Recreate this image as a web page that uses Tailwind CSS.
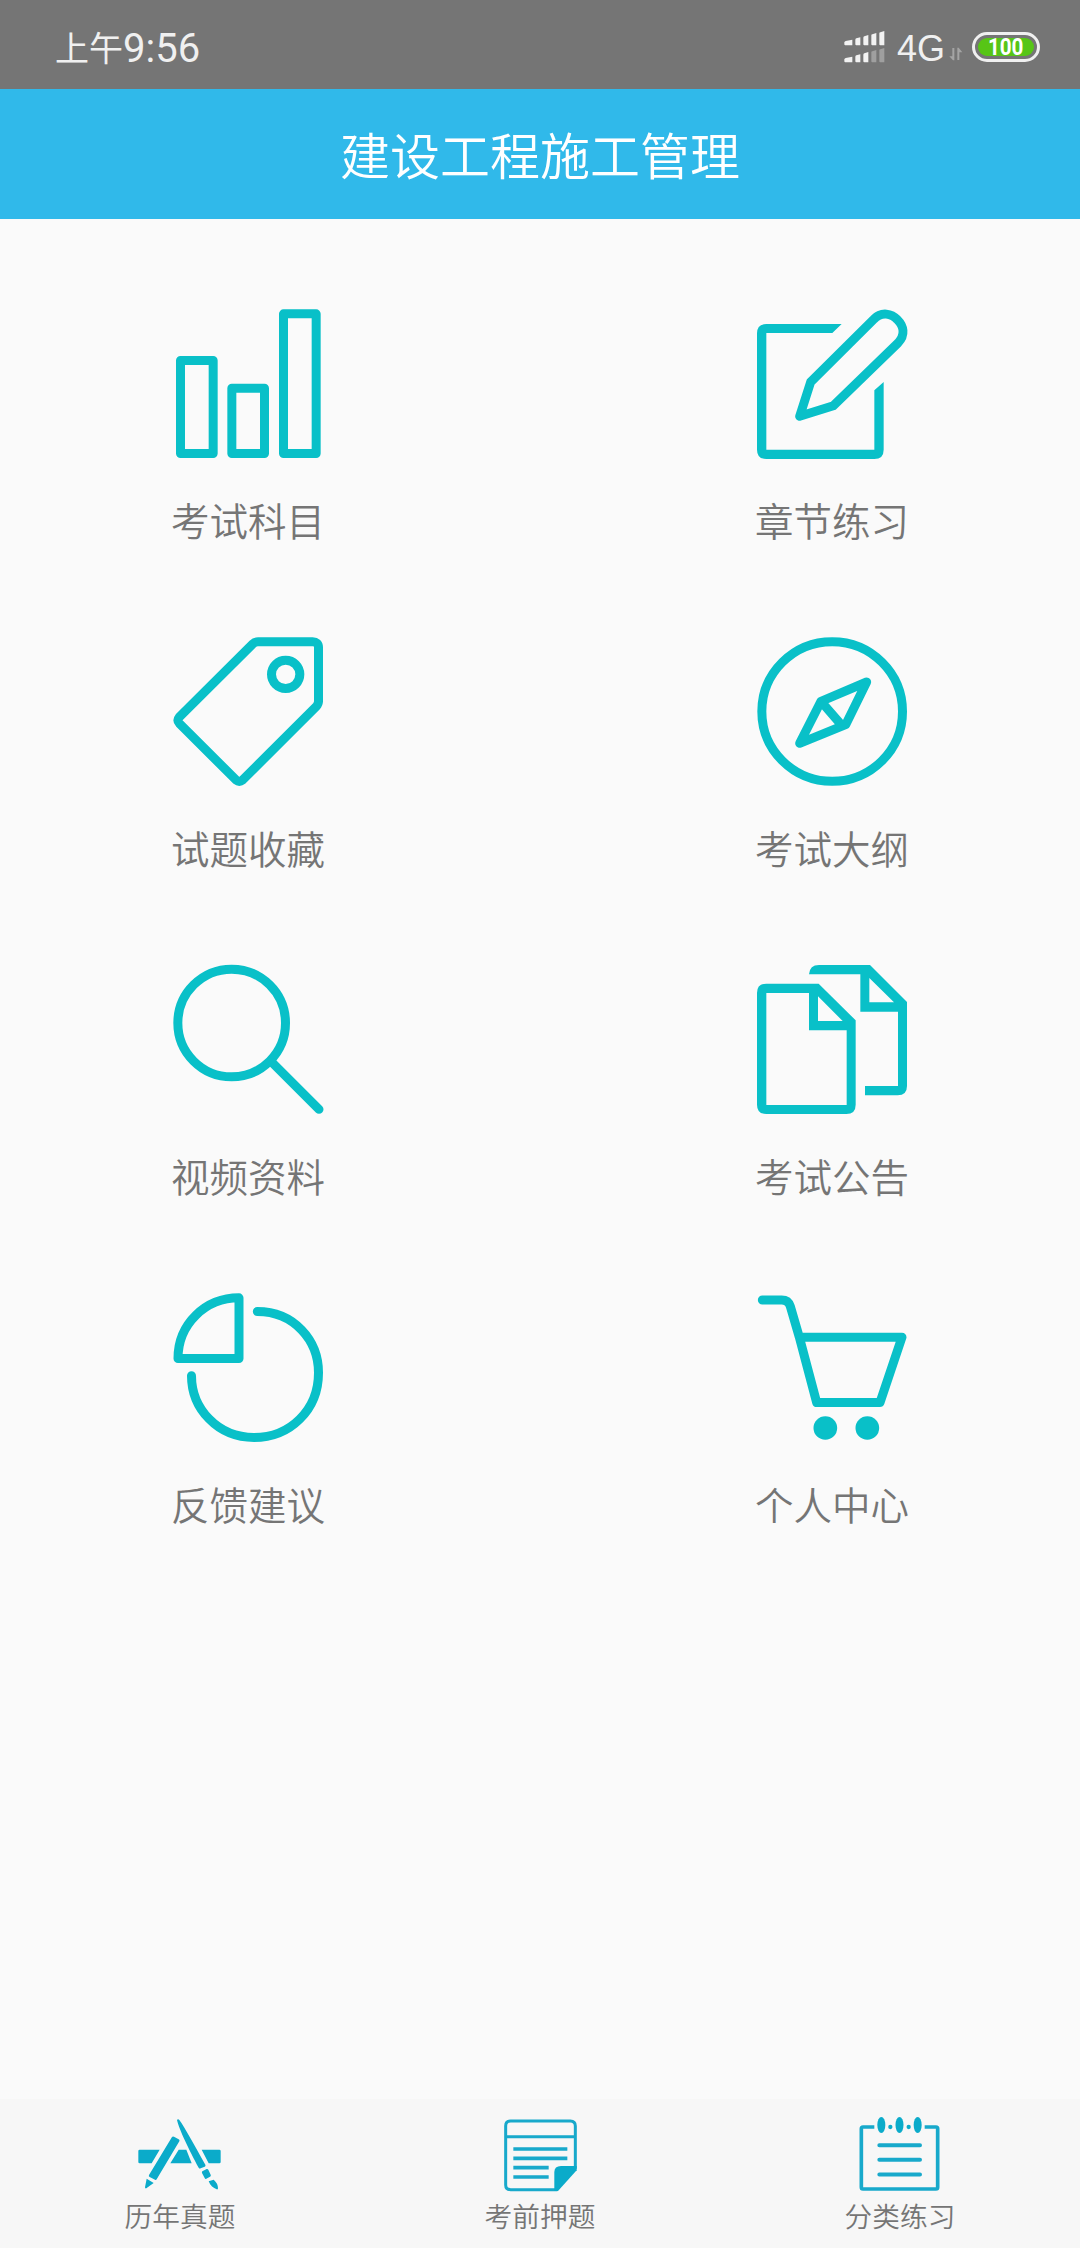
<!DOCTYPE html>
<html lang="zh-CN">
<head>
  <meta charset="UTF-8">
  <meta name="viewport" content="width=device-width, initial-scale=1.0">
  <title>建设工程施工管理</title>
  <script src="https://cdn.jsdelivr.net/npm/@tailwindcss/browser@4"></script>
</head>
<body class="bg-[#fafafa] h-[2248px] flex flex-col overflow-hidden font-['Noto_Sans_CJK_SC',sans-serif] font-[350] text-[#757575]">

  <!-- Status bar -->
  <div class="h-[89px] shrink-0 bg-[#757575] flex items-center justify-between pl-[55px] pr-[39px] pt-[5px] text-[#f0f0f0]">
    <div class="flex items-center leading-none font-normal">
      <span class="text-[34px]">上午</span>
      <span class="text-[40px] font-['Roboto',sans-serif] w-[78px] mt-[3px] whitespace-nowrap">9:56</span>
    </div>
    <div class="flex items-center">
      <svg class="w-[42px] h-[34px] mt-[2px]" viewBox="74 95 126 102" fill="#f2f2f2">
        <path d="M75 128l4-3 20-4v17H78q-3 0-3-3zM108 121q0-3 3-4l12-3v24h-12q-3 0-3-3zM132 115q0-3 3-4l12-4v31h-12q-3 0-3-3zM156 108q0-3 3-3l12-4v37h-12q-3 0-3-3zM180 102q0-3 3-3l12-4v43h-12q-3 0-3-3z"/>
        <path d="M75 179l4-3 20-4v17H78q-3 0-3-3zM108 172q0-3 3-4l12-3v24h-12q-3 0-3-3zM132 166q0-3 3-4l12-4v31h-12q-3 0-3-3z"/>
        <path fill="#9f9f9f" d="M156 159q0-3 3-3l12-4v37h-12q-3 0-3-3zM180 153q0-3 3-3l12-4v43h-12q-3 0-3-3z"/>
      </svg>
      <span class="ml-[11px] mt-[3px] w-[52px] text-[36px] leading-none font-['Liberation_Sans',sans-serif]">4G</span>
      <svg class="w-[14px] h-[14px] mt-[14px]" viewBox="389 141 42 42" fill="#a4a4a4">
        <path d="M399 144h6v37h-4l-11-12h9zM414 180V143h4l11 14h-9v23z"/>
      </svg>
      <div class="ml-[9px] mr-px w-[68px] h-[30px] rounded-full border-[3px] border-[#f0f0f0] p-[3px]">
        <div class="h-full rounded-full bg-[#57c516] flex items-center justify-center text-white font-['Roboto',sans-serif] font-bold text-[24px] leading-none"><span class="scale-x-[.86]">100</span></div>
      </div>
    </div>
  </div>

  <!-- Title bar -->
  <header class="h-[130px] shrink-0 bg-[#30b9ea] flex items-center justify-center text-white pb-[3px]">
    <h1 class="text-[50px] leading-none font-[350]">建设工程施工管理</h1>
  </header>

  <!-- Menu -->
  <main class="flex-1 pt-[85px] grid grid-cols-2 gap-x-[88px] auto-rows-[328px] content-start text-[38.5px] leading-[39px]">
    <a class="flex flex-col items-center gap-[36px]">
      <svg class="size-[160px]" viewBox="54 42 480 480" fill="none" stroke="#09c0c8" stroke-width="27" stroke-linejoin="round">
        <path d="M91.500 211.500h98v279h-98zM245.500 294.500h98v196h-98zM400.500 71.500h98v419h-98z"/>
      </svg>
      <span>考试科目</span>
    </a>
    <a class="flex flex-col items-center gap-[36px]">
      <svg class="size-[160px]" viewBox="66 42 480 480" fill="none" stroke="#09c0c8" stroke-width="27" stroke-linejoin="round">
        <path fill="#09c0c8" stroke="none" d="M335 102H109q-28 0-28 28v349q0 28 28 28h324q28 0 28-28V276l-28 25v178H109V129h198z"/>
        <path d="M209 379l33-103L431 88C455 63 485 71 502 89C521 108 527 135 504 159L310 347z"/>
      </svg>
      <span>章节练习</span>
    </a>
    <a class="flex flex-col items-center gap-[36px]">
      <svg class="size-[160px]" viewBox="54 36 480 480" fill="none" stroke="#09c0c8" stroke-width="27">
        <path d="M324 65.500H488Q505.500 65.500 505.500 82V244Q505.500 252 499 259L278 480Q268 488 258 480L88 310Q80 301 88 291L308 72Q315 65.500 324 65.500z"/>
        <circle cx="407" cy="163" r="42.500"/>
      </svg>
      <span>试题收藏</span>
    </a>
    <a class="flex flex-col items-center gap-[36px]">
      <svg class="size-[160px]" viewBox="66 36 480 480" fill="none" stroke="#09c0c8" stroke-width="27" stroke-linejoin="round">
        <ellipse cx="306.500" cy="274.500" rx="211" ry="209.500"/>
        <path d="M410 186L273 244L209 370L347 314zM273 244L337 318"/>
      </svg>
      <span>考试大纲</span>
    </a>
    <a class="flex flex-col items-center gap-[36px]">
      <svg class="size-[160px]" viewBox="54 30 480 480" fill="none" stroke="#09c0c8" stroke-width="27" stroke-linecap="round">
        <circle cx="245" cy="219" r="161.500"/>
        <path d="M369 340L507 478"/>
      </svg>
      <span>视频资料</span>
    </a>
    <a class="flex flex-col items-center gap-[36px]">
      <svg class="size-[160px]" viewBox="66 30 480 480" fill="#09c0c8" fill-rule="evenodd">
        <path d="M109 101H266L377 211V464q0 28-28 28H109q-28 0-28-28V129q0-28 28-28zM109 129V465H350V241H237V129zM264 139V213H338z"/>
        <path d="M237 73q2-28 30-28H420L531 156V408q0 28-28 28H405V408H504V185H391V73zM418 84V157H492z"/>
      </svg>
      <span>考试公告</span>
    </a>
    <a class="flex flex-col items-center gap-[36px]">
      <svg class="size-[160px]" viewBox="54 24 480 480" fill="none" stroke="#09c0c8" stroke-width="27" stroke-linecap="round" stroke-linejoin="round">
        <path d="M267 53.500V235.500H84C84 132 166 53.500 267 53.500z"/>
        <path d="M322 94.500C431 94.500 505.500 180 505.500 278C505.500 390 420 472.500 312 472.500C203 472.500 124.500 386 124.500 287"/>
      </svg>
      <span>反馈建议</span>
    </a>
    <a class="flex flex-col items-center gap-[36px]">
      <svg class="size-[160px]" viewBox="66 24 480 480" fill="none" stroke="#09c0c8" stroke-width="27" stroke-linecap="round" stroke-linejoin="round">
        <path d="M97 60H155Q175 60 181 79L208 171.500H516L450 367.500H260L208 171.500"/>
        <g fill="#09c0c8" stroke="none">
          <circle cx="286" cy="444" r="35.500"/>
          <circle cx="412" cy="444" r="35.500"/>
        </g>
      </svg>
      <span>个人中心</span>
    </a>
  </main>

  <!-- Tab bar -->
  <nav class="h-[149px] shrink-0 bg-[#f7f7f7] grid grid-cols-3 pt-[13px] text-[27.7px] leading-[28px]">
    <a class="flex flex-col items-center gap-[9px]">
      <svg class="w-[88px] h-[80px]" viewBox="108 96 264 240" fill="#0babca">
        <path d="M119 209H179L155 250H119q-4 0-4-4V213q0-4 4-4zM236 209H259L275 250H211zM305 209H358q4 0 4 4V246q0 4-4 4H326z"/>
        <path d="M216 171q2-3 6-1L236 178q4 2 2 6L170 298q-2 3-5 1L149 291q-4-2-2-6zM140 296L161 309L139 325q-4 1-4-3z"/>
        <path d="M231 120q3-5 7 0C255 143 283 196 316 254q2 4-2 6L302 265q-4 2-6-2C268 211 238 150 231 120zM307 274L320 267q3-1 5 2L332 284q2 4-2 6L319 296q-3 2-5-2L306 279q-1-3 1-5zM326 304L341 299C352 309 354 317 354 325q0 4-4 3C340 324 331 317 326 304z"/>
      </svg>
      <span>历年真题</span>
    </a>
    <a class="flex flex-col items-center gap-[9px]">
      <svg class="w-[88px] h-[80px]" viewBox="1188 96 264 240" fill="none" stroke="#18a9cb" stroke-width="9">
        <path d="M1426 266V138Q1426 123 1411 123H1232Q1217 123 1217 138V315Q1217 329 1232 329H1372M1217 170H1426"/>
        <path stroke-width="11" d="M1240 207H1402M1240 235H1402M1240 263H1346M1240 291H1346"/>
        <path fill="#0babca" stroke="none" d="M1430 258V271L1374 333H1363V276Q1363 258 1383 258z"/>
      </svg>
      <span>考前押题</span>
    </a>
    <a class="flex flex-col items-center gap-[9px]">
      <svg class="w-[88px] h-[80px]" viewBox="168 96 264 240" fill="none" stroke="#18a9cb" stroke-width="11" stroke-linejoin="round">
        <path d="M223 141H189Q184 141 184 146V322Q184 327 189 327H408Q413 327 413 322V146Q413 141 408 141H374"/>
        <path stroke-width="12" stroke-linecap="round" d="M238 195.500H360M238 239.500H360M238 283.500H360"/>
        <g fill="#0babca" stroke="none">
          <ellipse cx="244" cy="135" rx="12" ry="24"/>
          <ellipse cx="298.500" cy="135" rx="12" ry="24"/>
          <ellipse cx="353" cy="135" rx="12" ry="24"/>
          <circle cx="271" cy="141" r="6.500"/>
          <circle cx="326" cy="141" r="6.500"/>
        </g>
      </svg>
      <span>分类练习</span>
    </a>
  </nav>
</body>
</html>
